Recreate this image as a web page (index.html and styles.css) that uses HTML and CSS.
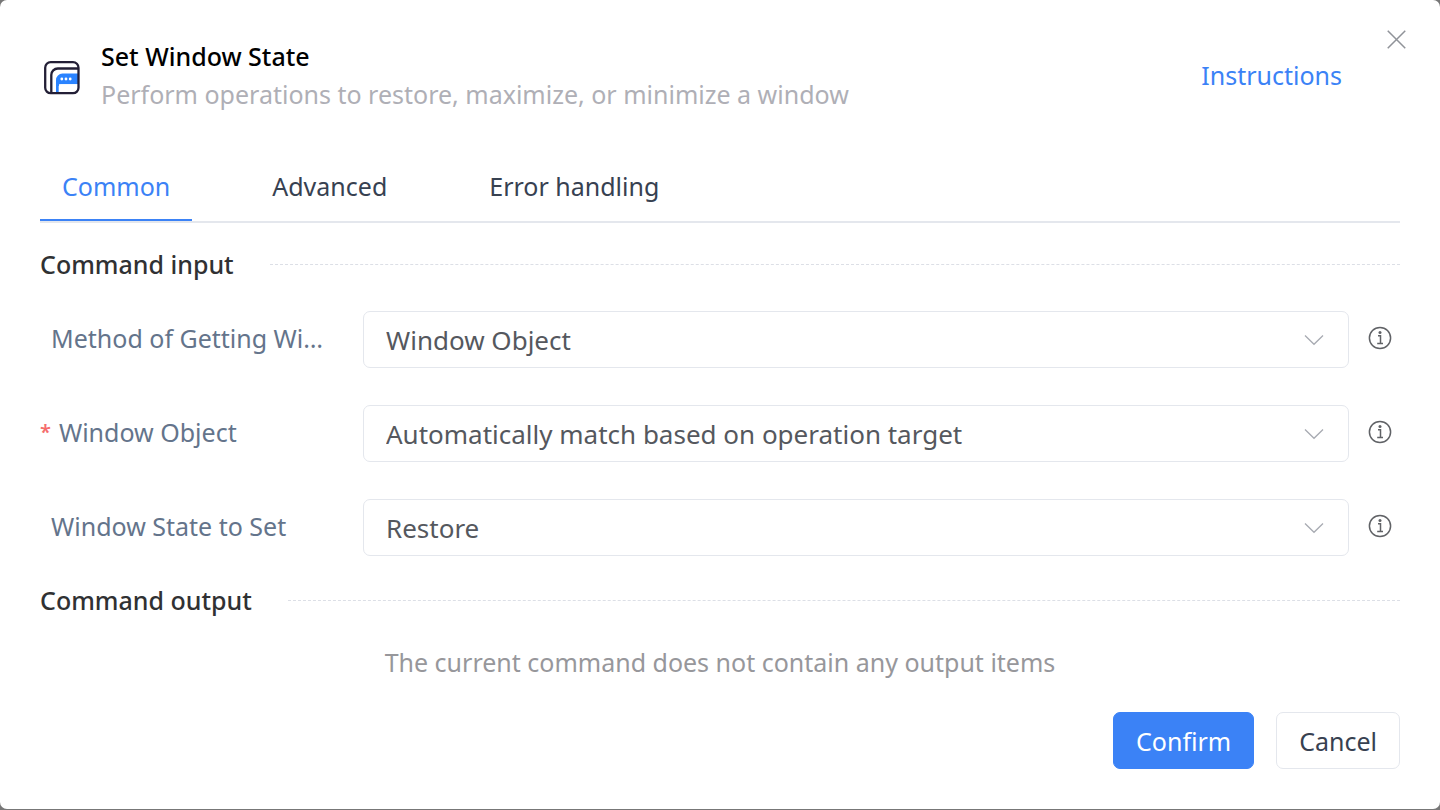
FILE: index.html
```html
<!DOCTYPE html>
<html lang="en">
<head>
<meta charset="utf-8">
<title>Set Window State</title>
<link rel="stylesheet" href="styles.css">
</head>
<body>
<svg class="sprite" aria-hidden="true">
  <symbol id="info" viewBox="0 0 24 24">
    <circle cx="12" cy="12" r="10.6" fill="none" stroke="currentColor" stroke-width="1.5"/>
    <circle cx="12" cy="6.500" r="1.5" fill="currentColor"/>
    <path d="M10 9.700h2.500v7.500M9.200 17.400h5.800" fill="none" stroke="currentColor" stroke-width="1.5"/>
  </symbol>
  <symbol id="chevron" viewBox="0 0 20 12">
    <path d="M1 1.5l9 8.8 9-8.8" fill="none" stroke="currentColor" stroke-width="1.3"/>
  </symbol>
</svg>
<main class="dialog" role="dialog" aria-labelledby="title">
  <button class="close" type="button" aria-label="Close">
    <svg viewBox="0 0 18 18"><path d="M.7.7l16.6 16.6M17.3.7L.7 17.3" fill="none" stroke="currentColor" stroke-width="1.4"/></svg>
  </button>
  <header class="header">
    <svg class="logo" viewBox="0 0 36 34" aria-hidden="true">
      <path d="M12 32V19a6.500 6.500 0 0 1 6.500-6.500H34v10.700H15V32z" fill="#2a83ff"/>
      <path d="M14.700 31.500v-6a2.300 2.300 0 0 1 2.300-2.300h17v8.300z" fill="#fff"/>
      <path d="M7.300 32V14a6.500 6.500 0 0 1 6.500-6.500H34" fill="none" stroke="#231f36" stroke-width="2.300"/>
      <rect x="1.200" y="1.200" width="33.300" height="31" rx="5.500" fill="none" stroke="#231f36" stroke-width="2.300"/>
      <g fill="#fff"><circle cx="17.800" cy="18" r="1.400"/><circle cx="22" cy="18" r="1.400"/><circle cx="26.200" cy="18" r="1.400"/></g>
    </svg>
    <div class="heading">
      <h1 class="title" id="title">Set Window State</h1>
      <p class="subtitle">Perform operations to restore, maximize, or minimize a window</p>
    </div>
    <a class="instructions" href="#">Instructions</a>
  </header>

  <nav class="tabs" role="tablist">
    <button class="tab tab-active" type="button" role="tab" aria-selected="true">Common</button>
    <button class="tab" type="button" role="tab" aria-selected="false">Advanced</button>
    <button class="tab" type="button" role="tab" aria-selected="false">Error handling</button>
  </nav>

  <h2 class="section">Command input</h2>
  <form class="fields">
    <div class="field">
      <label class="label" for="method">Method of Getting Wi…</label>
      <div class="control">
        <select class="select" id="method"><option>Window Object</option></select>
        <svg class="chevron"><use href="#chevron"/></svg>
      </div>
      <svg class="info"><use href="#info"/></svg>
    </div>
    <div class="field">
      <label class="label label-required" for="object"><span class="star">*</span>Window Object</label>
      <div class="control">
        <select class="select" id="object"><option>Automatically match based on operation target</option></select>
        <svg class="chevron"><use href="#chevron"/></svg>
      </div>
      <svg class="info"><use href="#info"/></svg>
    </div>
    <div class="field">
      <label class="label" for="state">Window State to Set</label>
      <div class="control">
        <select class="select" id="state"><option>Restore</option></select>
        <svg class="chevron"><use href="#chevron"/></svg>
      </div>
      <svg class="info"><use href="#info"/></svg>
    </div>
  </form>

  <h2 class="section">Command output</h2>
  <p class="empty">The current command does not contain any output items</p>

  <footer class="footer">
    <button class="button button-primary" type="button">Confirm</button>
    <button class="button" type="button">Cancel</button>
  </footer>
</main>
</body>
</html>
```

FILE: styles.css
```css
* { box-sizing: border-box; }

body {
  margin: 0;
  padding-bottom: 1px;
  background: #777;
  font: 25px/38px "Noto Sans", "Open Sans", sans-serif;
  color: #374151;
}

button, select { font: inherit; color: inherit; }
h1, h2, p { margin: 0; }
.sprite { display: none; }

.dialog {
  position: relative;
  display: flex;
  flex-direction: column;
  min-height: calc(100vh - 1px);
  padding: 37px 40px 40px;
  border-radius: 7px;
  background: #fff;
}

.close {
  position: absolute;
  top: 26px;
  right: 30px;
  display: flex;
  padding: 4px;
  border: 0;
  background: none;
  color: #909399;
}
.close svg { width: 19px; height: 19px; }

.header {
  display: flex;
  align-items: center;
  padding: 0 58px 0 4px;
}
.logo { width: 36px; height: 34px; margin: 5px 21px 0 0; }
.heading { flex: 1; }
.title { font-size: 25px; font-weight: 500; color: #000; }
.subtitle { color: #afafb6; }
.instructions { color: #3b82f6; text-decoration: none; }

.tabs {
  display: flex;
  gap: 58px;
  margin-top: 39px;
  border-bottom: 2px solid #e4e7ed;
}
.tab {
  padding: 15px 22px 14px;
  border: 0;
  border-bottom: 2px solid transparent;
  background: none;
}
.tab-active { color: #3b82f6; border-bottom-color: #3b82f6; }

.section {
  display: flex;
  align-items: center;
  gap: 36px;
  font-size: 25px;
  font-weight: 500;
  color: #303133;
}
.section::after {
  content: "";
  flex: 1;
  border-top: 1px dashed #dcdfe6;
}
.tabs + .section { margin-top: 22px; }

.fields {
  display: grid;
  gap: 37px;
  margin: 28px 0 25px;
}
.field {
  display: grid;
  grid-template-columns: 290px 1fr 24px;
  align-items: center;
  padding-right: 8px;
}
.label {
  padding: 0 0 4px 11px;
  white-space: nowrap;
  color: #64748b;
}
.label-required {
  display: flex;
  gap: 8px;
  padding-left: 0;
}
.star { color: #f56c6c; font-size: 20px; font-weight: 600; }

.control {
  position: relative;
  margin: 0 19px 0 33px;
}
.select {
  display: block;
  width: 100%;
  height: 57px;
  padding: 0 60px 0 22px;
  border: 1px solid #e4e7ed;
  border-radius: 7px;
  background: #fff;
  color: #55585e;
  font-size: 26px;
  appearance: none;
}
.chevron {
  position: absolute;
  top: 23px;
  right: 25px;
  width: 20px;
  height: 12px;
  color: #a8abb2;
  pointer-events: none;
}
.info { width: 24px; height: 24px; margin-bottom: 4px; color: #606266; }

.empty {
  margin-top: 24px;
  text-align: center;
  color: #97979b;
}

.footer {
  display: flex;
  justify-content: flex-end;
  gap: 22px;
  margin-top: auto;
}
.button {
  height: 57px;
  padding: 0 22px;
  border: 1px solid #e4e7ed;
  border-radius: 7px;
  background: #fff;
}
.button-primary { border-color: #3b82f6; background: #3b82f6; color: #fff; }
```
